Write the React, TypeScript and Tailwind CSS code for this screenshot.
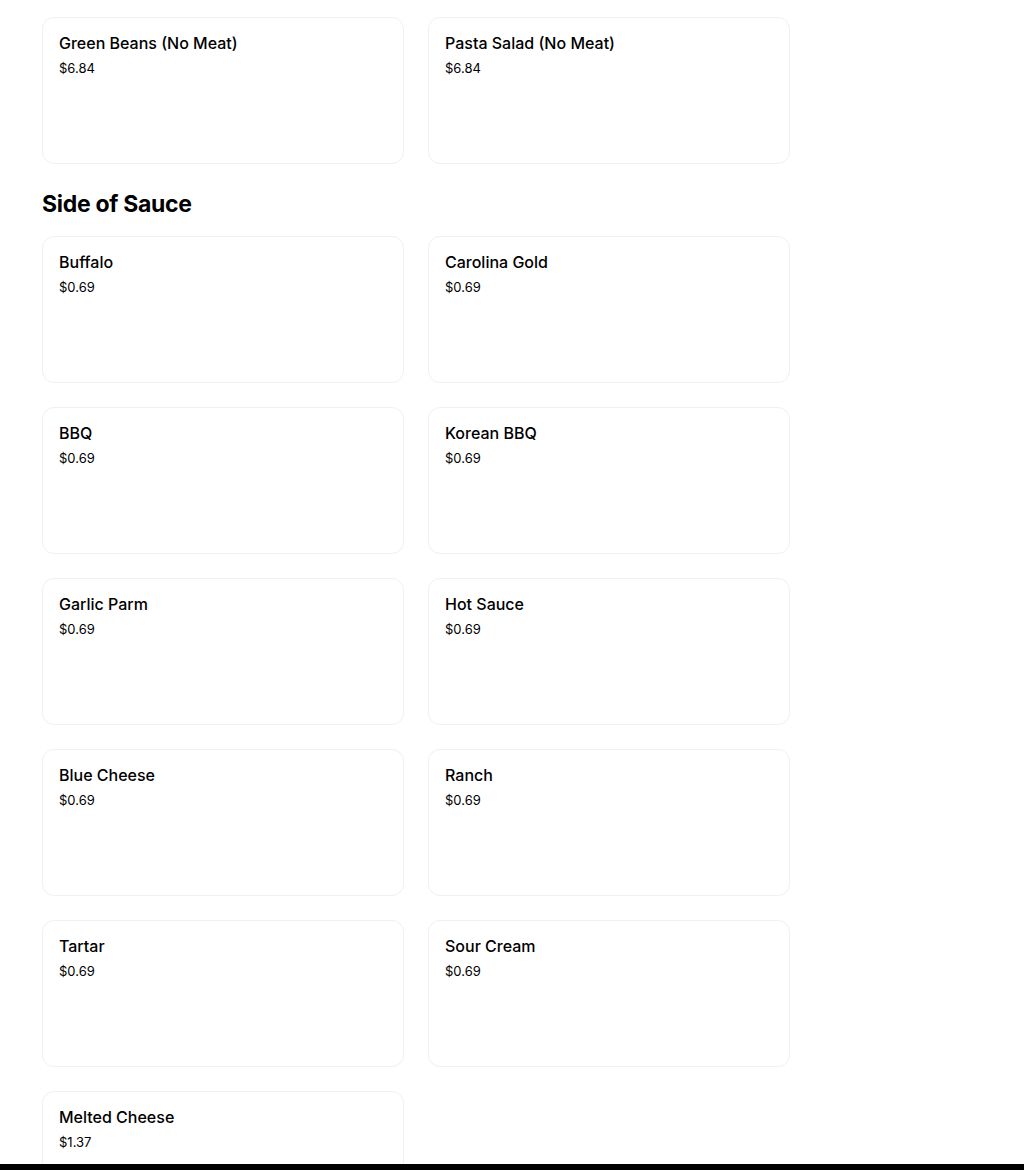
import React from "react";

const Card = ({ name, price }: { name: string; price: string }) => (
  <div className="h-[147px] rounded-xl border border-[#f0f0f0] bg-white px-4 pt-[15px]">
    <div className="text-[16px] leading-5 font-medium text-black">{name}</div>
    <div className="mt-[5px] text-[13px] leading-5 text-black">{price}</div>
  </div>
);

const sauces: [string, string][] = [
  ["Buffalo", "$0.69"],
  ["Carolina Gold", "$0.69"],
  ["BBQ", "$0.69"],
  ["Korean BBQ", "$0.69"],
  ["Garlic Parm", "$0.69"],
  ["Hot Sauce", "$0.69"],
  ["Blue Cheese", "$0.69"],
  ["Ranch", "$0.69"],
  ["Tartar", "$0.69"],
  ["Sour Cream", "$0.69"],
  ["Melted Cheese", "$1.37"],
];

export default function App() {
  return (
    <div
      className="min-h-screen bg-white pl-[42px] pt-[17px]"
      style={{ fontFamily: "Inter, 'Noto Sans', sans-serif" }}
    >
      <div className="grid w-[748px] grid-cols-2 gap-6">
        <Card name="Green Beans (No Meat)" price="$6.84" />
        <Card name="Pasta Salad (No Meat)" price="$6.84" />
      </div>
      <h2 className="mt-[24px] mb-[16px] text-[23px] leading-8 font-bold tracking-[-0.3px] text-black">
        Side of Sauce
      </h2>
      <div className="grid w-[748px] grid-cols-2 gap-6 pb-10">
        {sauces.map(([n, p]) => (
          <Card key={n} name={n} price={p} />
        ))}
      </div>
      <div className="fixed bottom-0 left-0 right-0 h-[6px] bg-black" />
    </div>
  );
}
